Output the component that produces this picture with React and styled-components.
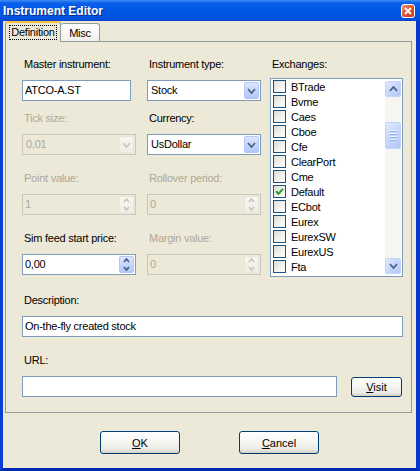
import React from 'react';
import styled, { createGlobalStyle, css } from 'styled-components';

const GlobalStyle = createGlobalStyle`
  html, body { margin: 0; padding: 0; background: #ECE9D8; }
  body {
    font-family: "Liberation Sans", Arial, sans-serif;
    font-size: 11px;
    letter-spacing: -0.25px;
    color: #000;
  }
  * { box-sizing: border-box; }
`;

const Window = styled.div`
  width: 420px;
  height: 471px;
  display: flex;
  flex-direction: column;
  overflow: hidden;
  background: #ECE9D8;
`;

const TitleBar = styled.div`
  height: 21px;
  flex: none;
  display: flex;
  align-items: center;
  justify-content: space-between;
  padding: 0 5px 0 3px;
  background: linear-gradient(to bottom, #3D8FF5 0%, #0B60EA 14%, #0058E6 40%, #0054E2 75%, #004FDB 92%, #0040C6 100%);
`;

const Title = styled.span`
  color: #fff;
  font-weight: bold;
  font-size: 12px;
  letter-spacing: 0;
  text-shadow: 1px 1px 0 #0A2A8A;
`;

const CloseButton = styled.div`
  width: 14px;
  height: 14px;
  margin-top: 1px;
  border: 1px solid #fff;
  border-radius: 3px;
  background: linear-gradient(135deg, #F29A7C 0%, #E2552F 45%, #C8381B 100%);
  display: flex;
  align-items: center;
  justify-content: center;
`;

const Frame = styled.div`
  flex: 1;
  display: flex;
  flex-direction: column;
  border-left: 3px solid #0842D5;
  border-right: 4px solid #0839CF;
  border-bottom: 3px solid #0028B2;
`;

const TabStrip = styled.div`
  height: 20px;
  flex: none;
  display: flex;
  align-items: flex-end;
  padding-left: 2px;
`;

const Tab = styled.div`
  position: relative;
  display: flex;
  align-items: center;
  justify-content: center;
  border: 1px solid #919B9C;
  border-bottom: none;
  border-radius: 3px 3px 0 0;
  ${p => p.$active ? css`
    width: 56px;
    height: 21px;
    margin-bottom: -1px;
    z-index: 1;
    background: #ECE9D8;
    border-top: 2px solid #FFC13C;
    padding-bottom: 1px;
  ` : css`
    width: 39px;
    height: 18px;
    border-left: none;
    background: linear-gradient(#FFFFFF, #F1F0EA);
  `}
`;

const FocusText = styled.span`
  border: 1px dotted #000;
  padding: 0 1px;
  line-height: 13px;
`;

const Panel = styled.div`
  height: 372px;
  flex: none;
  margin: 0 4px 0 2px;
  border: 1px solid #919B9C;
  background: #ECE9D8;
  padding: 16px 0 0 16px;
  display: flex;
  flex-direction: column;
`;

const TopSection = styled.div`
  display: flex;
  gap: 9px;
`;

const LeftColumns = styled.div`
  display: flex;
  flex-direction: column;
`;

const Row = styled.div`
  display: flex;
  align-items: ${p => p.$align || 'flex-start'};
  gap: ${p => p.$gap ?? 11}px;
  margin-top: ${p => p.$mt || 0}px;
`;

const Field = styled.div`
  display: flex;
  flex-direction: column;
  width: ${p => p.$w}px;
  margin-top: ${p => p.$mt || 0}px;
`;

const Label = styled.div`
  height: 13px;
  line-height: 13px;
  white-space: nowrap;
  margin-left: ${p => p.$ml || 2}px;
  margin-bottom: ${p => p.$mb ?? 9}px;
  color: ${p => (p.$disabled ? '#ACA899' : '#000')};
`;

const Box = styled.div`
  width: ${p => p.$w}px;
  height: ${p => p.$h || 21}px;
  display: flex;
  align-items: center;
  border: 1px solid ${p => (p.$disabled ? '#C9C7BA' : '#7F9DB9')};
  background: ${p => (p.$disabled ? '#ECE9D8' : '#FFFFFF')};
  color: ${p => (p.$disabled ? '#ACA899' : '#000')};
  white-space: nowrap;
`;

const BoxText = styled.span`
  flex: 1;
  padding-left: ${p => p.$pl ?? 2}px;
  line-height: 19px;
`;

const DropButton = styled.div`
  width: 15px;
  align-self: stretch;
  margin: 1px;
  border: 1px solid ${p => (p.$disabled ? '#E8E6DC' : '#B4C6F3')};
  border-radius: 2px;
  background: ${p => (p.$disabled
    ? 'linear-gradient(#F7F6F1, #EEEDE6)'
    : 'linear-gradient(#DCE6FD, #C3D4FC 55%, #B3C7F7)')};
  display: flex;
  align-items: center;
  justify-content: center;
`;

const SpinButtons = styled.div`
  width: 15px;
  align-self: stretch;
  margin: 1px;
  display: flex;
  flex-direction: column;
  border: 1px solid ${p => (p.$disabled ? '#E8E6DC' : '#B4C6F3')};
  border-radius: 2px;
  background: ${p => (p.$disabled
    ? 'linear-gradient(#F7F6F1, #EEEDE6)'
    : 'linear-gradient(#DCE6FD, #C3D4FC 55%, #B3C7F7)')};
`;

const SpinHalf = styled.div`
  flex: 1;
  display: flex;
  align-items: center;
  justify-content: center;
`;

const ListBox = styled.div`
  width: 133px;
  height: 199px;
  border: 1px solid #7F9DB9;
  background: #fff;
  display: flex;
`;

const ItemList = styled.div`
  flex: 1;
  padding-left: 2px;
  overflow: hidden;
`;

const Item = styled.div`
  height: 15px;
  display: flex;
  align-items: center;
  gap: 5px;
  white-space: nowrap;
`;

const CheckBox = styled.div`
  width: 13px;
  height: 13px;
  flex: none;
  border: 1px solid #1C5180;
  background: linear-gradient(135deg, #DCDCD7 0%, #F3F3F0 60%, #FFFFFF 100%);
  display: flex;
  align-items: center;
  justify-content: center;
`;

const ScrollBar = styled.div`
  width: 16px;
  margin: 2px 1px 2px 0;
  display: flex;
  flex-direction: column;
  background: #F6F5EF;
`;

const ScrollButton = styled.div`
  height: ${p => p.$h || 16}px;
  border: 1px solid #C4D3F6;
  border-radius: 2px;
  background: linear-gradient(135deg, #E2EAFE 0%, #C6D6FC 50%, #B4C8F6 100%);
  display: flex;
  flex-direction: column;
  align-items: center;
  justify-content: center;
  gap: 1px;
  margin-top: ${p => p.$mt || 0}px;
`;

const Grip = styled.div`
  width: 7px;
  height: 1px;
  background: #EEF4FE;
  box-shadow: 0 1px 0 #8EADF0;
  margin-bottom: 1px;
`;

const Track = styled.div`
  flex: 1;
`;

const PushButton = styled.div`
  width: ${p => p.$w}px;
  height: ${p => p.$h}px;
  border: 1px solid #003C74;
  border-radius: 3px;
  background: linear-gradient(#FFFFFF 0%, #F7F7F4 40%, #ECEBE5 80%, #D6D0C5 100%);
  display: flex;
  align-items: center;
  justify-content: center;
  letter-spacing: 0;
`;

const ButtonRow = styled.div`
  display: flex;
  justify-content: center;
  gap: 59px;
  padding-top: 18px;
`;

const Chevron = ({ dir = 'down', color = '#4D6185', w = 7, h = 4 }) => (
  <svg width={w + 2} height={h + 2} viewBox={`-1 -1 ${w + 2} ${h + 2}`}>
    <polyline
      points={dir === 'down' ? `0,0 ${w / 2},${h} ${w},0` : `0,${h} ${w / 2},0 ${w},${h}`}
      fill="none"
      stroke={color}
      strokeWidth="1.8"
    />
  </svg>
);

const Combo = ({ value, w, disabled, pl = 3 }) => (
  <Box $w={w} $disabled={disabled}>
    <BoxText $pl={pl}>{value}</BoxText>
    <DropButton $disabled={disabled}>
      <Chevron color={disabled ? '#CAC8BB' : '#4D6185'} />
    </DropButton>
  </Box>
);

const Spin = ({ value, w, disabled }) => (
  <Box $w={w} $disabled={disabled}>
    <BoxText $pl={2}>{value}</BoxText>
    <SpinButtons $disabled={disabled}>
      <SpinHalf><Chevron dir="up" w={5} h={3} color={disabled ? '#CAC8BB' : '#4D6185'} /></SpinHalf>
      <SpinHalf><Chevron dir="down" w={5} h={3} color={disabled ? '#CAC8BB' : '#4D6185'} /></SpinHalf>
    </SpinButtons>
  </Box>
);

const exchanges = [
  'BTrade', 'Bvme', 'Caes', 'Cboe', 'Cfe', 'ClearPort', 'Cme',
  'Default', 'ECbot', 'Eurex', 'EurexSW', 'EurexUS', 'Fta',
];

export default function App() {
  return (
    <>
      <GlobalStyle />
      <Window>
        <TitleBar>
          <Title>Instrument Editor</Title>
          <CloseButton>
            <svg width="8" height="8" viewBox="0 0 8 8">
              <path d="M1 1 L7 7 M7 1 L1 7" stroke="#fff" strokeWidth="1.8" />
            </svg>
          </CloseButton>
        </TitleBar>
        <Frame>
          <TabStrip>
            <Tab $active><FocusText>Definition</FocusText></Tab>
            <Tab>Misc</Tab>
          </TabStrip>
          <Panel>
            <TopSection>
              <LeftColumns>
                <Row>
                  <Field $w={114}>
                    <Label>Master instrument:</Label>
                    <Box $w={109}><BoxText>ATCO-A.ST</BoxText></Box>
                  </Field>
                  <Field $w={114}>
                    <Label>Instrument type:</Label>
                    <Combo value="Stock" w={114} />
                  </Field>
                </Row>
                <Row $mt={11}>
                  <Field $w={114}>
                    <Label $disabled>Tick size:</Label>
                    <Combo value="0,01" w={114} disabled />
                  </Field>
                  <Field $w={114}>
                    <Label>Currency:</Label>
                    <Combo value="UsDollar" w={114} />
                  </Field>
                </Row>
                <Row $mt={17}>
                  <Field $w={114}>
                    <Label $disabled>Point value:</Label>
                    <Spin value="1" w={114} disabled />
                  </Field>
                  <Field $w={114}>
                    <Label $disabled>Rollover period:</Label>
                    <Spin value="0" w={114} disabled />
                  </Field>
                </Row>
                <Row $mt={17}>
                  <Field $w={114}>
                    <Label>Sim feed start price:</Label>
                    <Spin value="0,00" w={114} />
                  </Field>
                  <Field $w={114}>
                    <Label $disabled>Margin value:</Label>
                    <Spin value="0" w={114} disabled />
                  </Field>
                </Row>
              </LeftColumns>
              <Field $w={133}>
                <Label $mb={7}>Exchanges:</Label>
                <ListBox>
                  <ItemList>
                    {exchanges.map(name => (
                      <Item key={name}>
                        <CheckBox>
                          {name === 'Default' && (
                            <svg width="9" height="9" viewBox="0 0 9 9">
                              <path d="M1 4.2 L3.5 6.8 L8 1.8" fill="none" stroke="#21A121" strokeWidth="2" />
                            </svg>
                          )}
                        </CheckBox>
                        {name}
                      </Item>
                    ))}
                  </ItemList>
                  <ScrollBar>
                    <ScrollButton><Chevron dir="up" /></ScrollButton>
                    <ScrollButton $h={27} $mt={25}>
                      <Grip /><Grip /><Grip /><Grip />
                    </ScrollButton>
                    <Track />
                    <ScrollButton><Chevron dir="down" /></ScrollButton>
                  </ScrollBar>
                </ListBox>
              </Field>
            </TopSection>
            <Field $w={381} $mt={17}>
              <Label>Description:</Label>
              <Box $w={381}><BoxText>On-the-fly created stock</BoxText></Box>
            </Field>
            <Field $w={381} $mt={17}>
              <Label>URL:</Label>
              <Row $gap={14} $align="center">
                <Box $w={315} />
                <PushButton $w={51} $h={20}><span><u>V</u>isit</span></PushButton>
              </Row>
            </Field>
          </Panel>
          <ButtonRow>
            <PushButton $w={80} $h={23}><span><u>O</u>K</span></PushButton>
            <PushButton $w={80} $h={23}><span><u>C</u>ancel</span></PushButton>
          </ButtonRow>
        </Frame>
      </Window>
    </>
  );
}
